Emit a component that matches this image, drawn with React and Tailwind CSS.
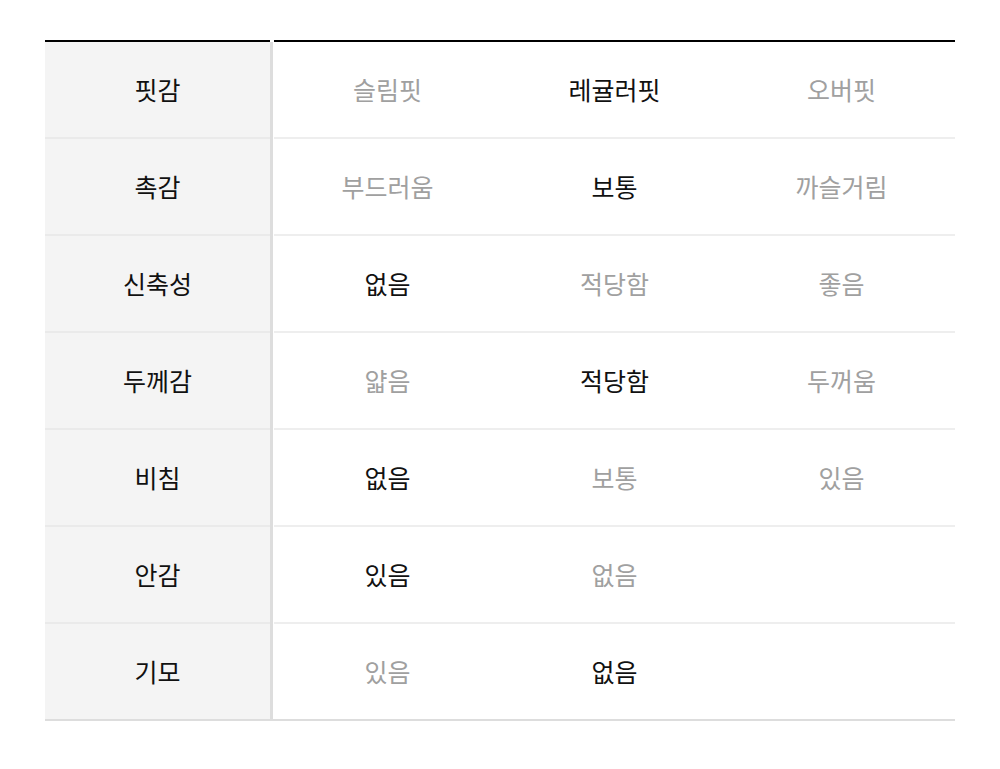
import React from "react";

const rows = [
  { label: "핏감", values: ["슬림핏", "레귤러핏", "오버핏"], sel: 1 },
  { label: "촉감", values: ["부드러움", "보통", "까슬거림"], sel: 1 },
  { label: "신축성", values: ["없음", "적당함", "좋음"], sel: 0 },
  { label: "두께감", values: ["얇음", "적당함", "두꺼움"], sel: 1 },
  { label: "비침", values: ["없음", "보통", "있음"], sel: 0 },
  { label: "안감", values: ["있음", "없음", ""], sel: 0 },
  { label: "기모", values: ["있음", "없음", ""], sel: 1 },
];

export default function App() {
  return (
    <div
      className="min-h-[769px] bg-white pt-[40px] px-[45px]"
      style={{ fontFamily: '"Noto Sans CJK KR", "Noto Sans", sans-serif' }}
    >
      <div className="flex w-[910px]">
        <div className="w-[225px] border-t-2 border-black">
          {rows.map((r, i) => (
            <div
              key={r.label}
              className={`flex h-[97px] items-center justify-center bg-[#f4f4f4] text-[25px] text-[#111] ${
                i === rows.length - 1 ? "border-b-2 border-[#dddddd]" : "border-b-2 border-[#eaeaea]"
              }`}
            >
              {r.label}
            </div>
          ))}
        </div>
        <div className="flex w-[4px] flex-col">
          <div className="h-[2px] bg-white" />
          <div className="flex flex-1">
            <div className="w-[3px] bg-[#dddddd]" />
            <div className="w-[1px] bg-white" />
          </div>
          <div className="h-[2px] bg-[#dddddd]" />
        </div>
        <div className="flex-1 border-t-2 border-black">
          {rows.map((r, i) => (
            <div
              key={r.label}
              className={`grid h-[97px] grid-cols-3 items-center text-center text-[25px] ${
                i === rows.length - 1 ? "border-b-2 border-[#dddddd]" : "border-b-2 border-[#eeeeee]"
              }`}
            >
              {r.values.map((v, j) => (
                <div key={j} className={j === r.sel ? "text-[#111]" : "text-[#a0a0a0]"}>
                  {v}
                </div>
              ))}
            </div>
          ))}
        </div>
      </div>
    </div>
  );
}
